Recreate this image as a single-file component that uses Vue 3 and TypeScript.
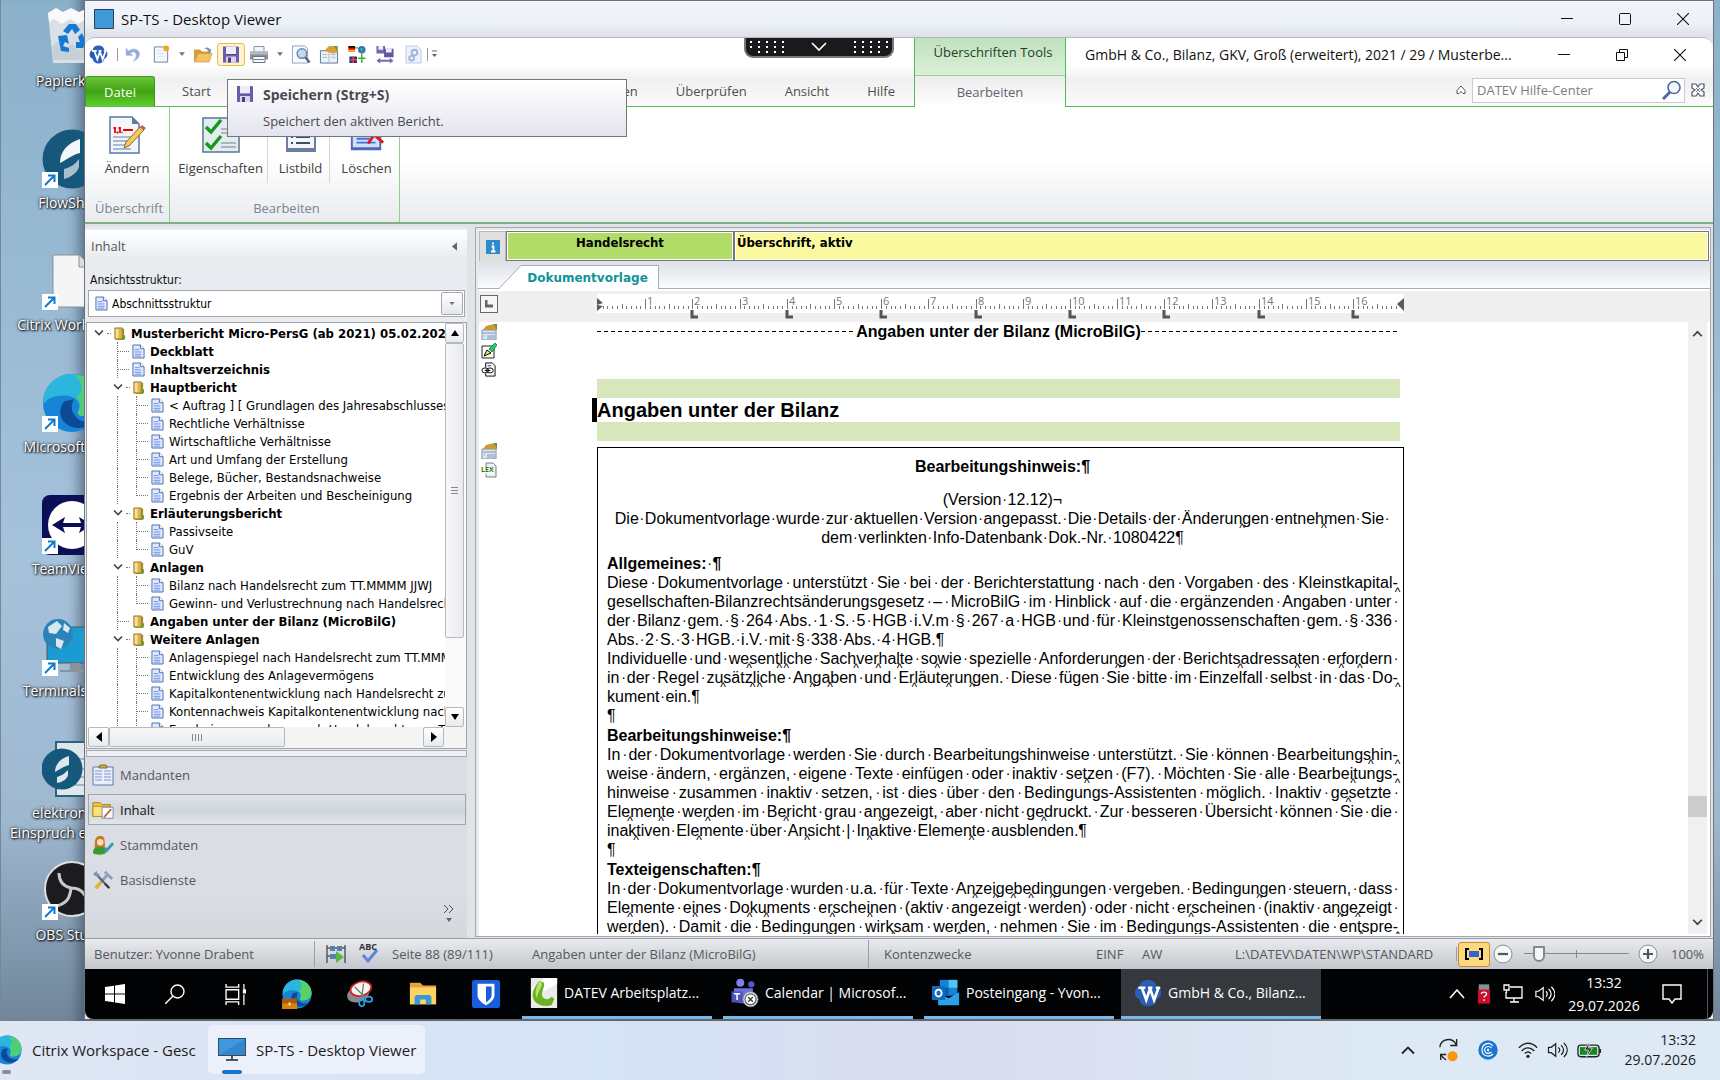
<script setup lang="ts">
import { h, ref } from 'vue'

type Art = [box: string, body: string]

const art: Record<string, Art> = {
  word: ['0 0 32 32', '<path d="M16 1c7 0 9 4 10 8 4 0 5 4 5 7s-2 6-5 7c-1 5-5 8-10 8S7 28 6 23c-3-1-5-3-5-7s2-7 5-7c1-5 4-8 10-8z" fill="#2a5fb5"/><path d="M5 10h8M9 10l5 14 4-12M18 10l5 14 5-14M16 10h5M25 10h5" fill="none" stroke="#fff" stroke-width="3"/>'],
  undo: ['0 0 16 16', '<path d="M1 1.500V9h7L5.500 6.500C8.500 4.500 11.500 6 11 9.500c-.3 2-1.500 3.500-3 5.500 4-1.500 7-4.500 6.500-8.500C14 3 8.500.5 3.800 4.500z" fill="#93abdc" stroke="#b9c9ea" stroke-width=".6"/>'],
  newdoc: ['0 0 18 20', '<path d="M2 2h14v16H2z" fill="#f4f7fc" stroke="#6d7f9d"/><path d="M5 6h8M5 9h8M5 12h8" stroke="#dbe4f2"/><circle cx="14.500" cy="3.500" r="3" fill="#f3a712"/>'],
  open: ['0 0 20 18', '<path d="M1 4h6l2 2h8v3H5L2 16H1z" fill="#d99b3c"/><path d="M5 8h14l-3 8.500H1.500z" fill="#f5c264" stroke="#c98b31" stroke-width=".6"/><path d="M11 3c3-2 5-1 6 1l1-1v4h-4l1.500-1C14.500 4 13 3 11 3z" fill="#8294b0"/>'],
  save: ['0 0 18 18', '<path d="M1 1h15l1 1v15H1z" fill="#6b5ca8"/><path d="M4 1h10v8H4z" fill="#eceff8"/><path d="M4 11h10v6H4z" fill="#d8d4ec"/><path d="M6 12h3v5H6z" fill="#4a3d86"/><path d="M4 9h10" stroke="#4f4391"/>'],
  print: ['0 0 20 18', '<path d="M5 1h10v7H5z" fill="#f2f4f8" stroke="#8d939d"/><path d="M1 6h18v8H1z" fill="#8b9099"/><path d="M1 6h18v3H1z" fill="#b3b7be"/><path d="M4 11h12v6H4z" fill="#f7f8fa" stroke="#6f747c"/><path d="M5 14h10" stroke="#5888c4"/>'],
  preview: ['0 0 20 20', '<path d="M1 1h13l3 3v15H1z" fill="#f7f9fd" stroke="#94a2b9"/><circle cx="11" cy="9" r="5" fill="#bcdcf5" stroke="#6e83a3" stroke-width="1.500"/><path d="M14.500 13l4.500 5.500" stroke="#55617a" stroke-width="2.500"/>'],
  props: ['0 0 20 20', '<path d="M1 6h18v13H1z" fill="#eaf0f8" stroke="#5d7291"/><path d="M10 6v13M3 10h5M3 13h5M12 10h5M12 13h5" stroke="#a9bad2"/><path d="M5 6l5-5h9v7l-5 1z" fill="#d9a033"/><path d="M15 1h4v6z" fill="#5ba441"/>'],
  flags: ['0 0 20 20', '<path d="M1 1h7v6H1z" fill="#e0001b"/><path d="M1 1h7v2H1z" fill="#111"/><path d="M1 5h7v2H1z" fill="#f6c400"/><path d="M2 12h8v7H2z" fill="#25357c"/><path d="M2 15.500h8M6 12v7" stroke="#e44" stroke-width="1.500"/><circle cx="15" cy="5" r="4" fill="#2c73c9"/><path d="M13 3l3 1-1 3z" fill="#63c044"/><path d="M8 3h3M15 9v10M11 14h8" stroke="#42ad33" stroke-width="1.500"/>'],
  savesync: ['0 0 20 20', '<path d="M1 1h9v8H1z" fill="#7365b0"/><path d="M3 1h5v4H3z" fill="#eef"/><path d="M9 4h10v9H9z" fill="#6556a3"/><path d="M11 4h6v4h-6z" fill="#eef"/><path d="M1 16.500l4-3v2h10v-2l4 3-4 3v-2H5v2z" fill="#7a66b5"/>'],
  gears: ['0 0 18 20', '<path d="M1 1h12l4 4v14H1z" fill="#eef3fb" stroke="#bac8de"/><circle cx="10" cy="8" r="3" fill="none" stroke="#9db6df" stroke-width="2"/><circle cx="7" cy="14" r="2.500" fill="none" stroke="#9db6df" stroke-width="2"/>'],
  more: ['0 0 8 10', '<path d="M1 1.500h6" stroke="#555"/><path d="M1 5h6L4 8.500z" fill="#666"/>'],
  down: ['0 0 8 6', '<path d="M0 0h8L4 5z" fill="#777"/>'],
  up: ['0 0 8 6', '<path d="M0 6h8L4 0z" fill="#000"/>'],
  downBlack: ['0 0 8 6', '<path d="M0 0h8L4 6z" fill="#000"/>'],
  left: ['0 0 6 10', '<path d="M6 0v10L0 5z" fill="#000"/>'],
  right: ['0 0 6 10', '<path d="M0 0v10l6-5z" fill="#000"/>'],
  leftGrey: ['0 0 6 10', '<path d="M6 0v10L0 5z" fill="#666"/>'],
  min: ['0 0 12 12', '<path d="M0 5.500h12" stroke="#111"/>'],
  max: ['0 0 12 12', '<rect x=".5" y=".5" width="11" height="11" rx="1" fill="none" stroke="#111"/>'],
  restore: ['0 0 12 12', '<path d="M.5 3.500h8v8h-8zM3.500 3V.5h8v8H9" fill="none" stroke="#111"/>'],
  close: ['0 0 12 12', '<path d="M0 0l12 12M12 0L0 12" stroke="#111" stroke-width="1.100"/>'],
  grip: ['0 0 36 14', '<path d="M1 2h36M1 7h36" stroke="#fff" stroke-width="2" stroke-dasharray="2 6"/><path d="M9 12h30" stroke="#fff" stroke-width="2" stroke-dasharray="2 6"/>'],
  gripR: ['0 0 36 14', '<path d="M1 2h36M1 7h36" stroke="#fff" stroke-width="2" stroke-dasharray="2 6"/><path d="M1 12h28" stroke="#fff" stroke-width="2" stroke-dasharray="2 6"/>'],
  chevWhite: ['0 0 16 10', '<path d="M1 1l7 7 7-7" fill="none" stroke="#fff" stroke-width="1.600"/>'],
  upWhite: ['0 0 16 10', '<path d="M1 9l7-8 7 8" fill="none" stroke="#fff" stroke-width="1.500"/>'],
  upDark: ['0 0 14 10', '<path d="M1 8.500l6-6 6 6" fill="none" stroke="#222" stroke-width="1.800"/>'],
  collapse: ['0 0 10 10', '<path d="M5 1l4 4.500v3H7L5 6.500 3 8.500H1v-3z" fill="#fff" stroke="#555"/>'],
  glass: ['0 0 20 20', '<circle cx="12" cy="7.500" r="6" fill="#f3f8ff" stroke="#4c68a4" stroke-width="1.600"/><path d="M8 12l-7 7" stroke="#4c68a4" stroke-width="3"/>'],
  xbox: ['0 0 14 14', '<path d="M1 1h4l2 3 2-3h4v4l-3 2 3 2v4H9l-2-3-2 3H1V9l3-2-3-2z" fill="#fff" stroke="#4d5568" stroke-width="1.200"/><path d="M5 5l4 4M9 5L5 9" stroke="#4d5568" stroke-width=".8"/>'],
  edit: ['0 0 38 40', '<path d="M2 2h22l7 7v29H2z" fill="#f3f6fb" stroke="#5c78a3" stroke-width="1.500"/><path d="M24 2v7h7" fill="#5c78a3"/><path d="M7 12v6M5.500 13H7M12 12v6M10.500 13H12" stroke="#e00" stroke-width="1.800"/><path d="M8.500 17.500h2M13.500 17.500h1M15 15h10" stroke="#e00" stroke-width="1.800"/><path d="M5 22h20M5 26h14M5 30h12M5 34h18" stroke="#8fa8cc" stroke-width="1.500"/><path d="M18 27L32 12l4 3-15 16-5 2z" fill="#f3c95e" stroke="#8d6b23"/><path d="M32 12l2-2 4 3-2 2z" fill="#c75a5a"/>'],
  checks: ['0 0 38 36', '<path d="M1 1h36v34H1z" fill="#e4ecf0" stroke="#557791" stroke-width="1.500"/><path d="M19 12h15M19 16h15M19 26h15M19 30h15" stroke="#99a4a8" stroke-width="1.500"/><path d="M4 10l5 5L19 3M4 26l5 5 10-12" fill="none" stroke="#149a1b" stroke-width="3.500"/>'],
  list: ['0 0 32 36', '<path d="M1 1h30v34H1z" fill="#6c7f9d"/><path d="M3 3h26v28H3z" fill="#f2f6fc"/><path d="M11 8h14M11 14h14M11 20h14M11 26h14" stroke="#3f4d63" stroke-width="2"/><path d="M6 8h2M6 14h2M6 20h2M6 26h2" stroke="#3f4d63" stroke-width="2"/>'],
  remove: ['0 0 38 36', '<path d="M2 1h32v33H2z" fill="#4d68b4"/><path d="M4 3h28v28H4z" fill="#cfe0fb"/><path d="M8 10h12M8 16h12M8 22h14M8 26h20" stroke="#4b70d8" stroke-width="2"/><path d="M20 12l16 14M34 8L20 27" stroke="#e01818" stroke-width="3"/>'],
  page: ['0 0 14 16', '<path d="M1 1h8l4 4v10H1z" fill="#dfe9ff" stroke="#4a68a8"/><path d="M9 1v4h4" fill="#fff" stroke="#4a68a8"/><path d="M3 6h5M3 8.500h7M3 11h7M3 13h7" stroke="#6a8be6"/>'],
  folder: ['0 0 14 16', '<path d="M2 2h8v12H2z" fill="#dcb54e" stroke="#7d6317" stroke-width=".8"/><path d="M3 3h3v10H3z" fill="#f7e09a"/><path d="M10 3h2v12H4l-1-1h7z" fill="#a98527"/><path d="M10 10h3v4h-3z" fill="#5ba52f"/>'],
  chev: ['0 0 10 8', '<path d="M1 1.500l4 4 4-4" fill="none" stroke="#444" stroke-width="1.600"/>'],
  clip: ['0 0 22 22', '<path d="M1 3h20v18H1z" fill="#e8eefb" stroke="#5d79b0"/><path d="M3 7h7M3 10h7M3 13h7M3 16h7M12 7h7M12 10h7M12 13h7M12 16h7" stroke="#7f97c8"/><path d="M7 4V2l2-1h4l2 1v2z" fill="#c9a94a" stroke="#80702c"/>'],
  inhalt: ['0 0 24 22', '<path d="M1 3h8l2 2h9v13H1z" fill="#f3c43b" stroke="#a9811e"/><path d="M1 7h19v11H1z" fill="#ffe080" stroke="#b08a24"/><path d="M11 8h12v12H11z" fill="#fdfdff" stroke="#6f88b5"/><path d="M13 19l8-9" stroke="#c66b2d" stroke-width="2"/>'],
  person: ['0 0 24 22', '<path d="M3 10c0-6 2-9 6-9s5 3 5 9v5H3z" fill="#c9772a"/><circle cx="9" cy="8" r="3.500" fill="#ffe0b5"/><path d="M1 20c0-5 3-7 8-7s6 3 6 7c-3 2-11 2-14 0z" fill="#3a9b35"/><path d="M14 14l2 3 7-8" fill="none" stroke="#2f9db0" stroke-width="3"/>'],
  tools: ['0 0 24 22', '<path d="M4 20L17 5M14 2l8 8" stroke="#8fa0b8" stroke-width="3"/><path d="M3 3l15 16" stroke="#55657d" stroke-width="2.500"/><path d="M4 20l6-7" stroke="#e5b62d" stroke-width="3.500"/><path d="M1 5l4-4 1 3 3 1-3 3z" fill="#8095b2"/><path d="M14 15l5 5" stroke="#333" stroke-width="2"/>'],
  more2: ['0 0 12 20', '<path d="M1 1l4 4-4 4M6 1l4 4-4 4" fill="none" stroke="#555"/><path d="M3 14h6l-3 4z" fill="#666"/>'],
  info: ['0 0 14 14', '<path d="M0 0h14v14H0z" fill="#2e8bcb"/><path d="M7 2.500v2M5.500 6.500h2v5M5 11.500h4.500" stroke="#fff" stroke-width="1.800" fill="none"/>'],
  card: ['0 0 16 16', '<path d="M1 6h14v10H1z" fill="#dbe7f7" stroke="#7b8ca8"/><path d="M2 9h12M3 12h1M6 12h8M6 14h8" stroke="#8496b5"/><path d="M2 6l3-4 8-2 3 1v5z" fill="#c99a35"/><path d="M13 0h3v6z" fill="#4ca23a"/>'],
  pen: ['0 0 16 16', '<path d="M1 3h12v12H1z" fill="#fff" stroke="#222"/><path d="M3 13l3-6 4 3z" fill="#f6ef43" stroke="#000"/><path d="M8 6l6-6 2 2-5 7z" fill="#1fd070" stroke="#064" stroke-width=".7"/>'],
  link: ['0 0 16 16', '<path d="M5 1h7l3 3v11H5z" fill="#fff" stroke="#000"/><path d="M7 4h4" stroke="#22c"/><path d="M1 6h12v6H1z" fill="#fff"/><rect x="1" y="6.500" width="7" height="5" rx="2.500" fill="none" stroke="#000"/><rect x="6" y="6.500" width="7" height="5" rx="2.500" fill="none" stroke="#000"/><path d="M4 9h6" stroke="#000"/>'],
  lexpage: ['0 0 16 16', '<path d="M5 1h7l3 3v11H5z" fill="#eef0f5" stroke="#777d8c"/><path d="M0 5h13v7H0z" fill="#f5faef"/>'],
  zoomfit: ['0 0 18 12', '<path d="M4 1H1v10h3M14 1h3v10h-3" fill="none" stroke="#000" stroke-width="2"/><path d="M4 3h10v6H4z" fill="#3266cf"/>'],
  minus: ['0 0 20 20', '<circle cx="10" cy="10" r="9" fill="#f6f7f8" stroke="#8a8f96"/><path d="M5 10h10" stroke="#555" stroke-width="2.200"/>'],
  plus: ['0 0 20 20', '<circle cx="10" cy="10" r="9" fill="#f6f7f8" stroke="#8a8f96"/><path d="M5 10h10M10 5v10" stroke="#555" stroke-width="2.200"/>'],
  play: ['0 0 22 20', '<path d="M2 1v18M20 1v18M2 4h18M2 12h10" stroke="#555b63" stroke-width="1.500"/><path d="M5 2h5v5H5zM12 2h5v5h-5zM5 10h6v5H5z" fill="#5681a8"/><path d="M11 7l8 6-8 6z" fill="#5eb546"/>'],
  tick: ['0 0 20 20', '<path d="M4 11l5 6L18 6" fill="none" stroke="#5b86dc" stroke-width="3"/>'],
  win: ['0 0 20 20', '<path d="M0 3l9-1.300V9.500H0zM10 1.500L20 0v9.500H10zM0 10.500h9v7.800L0 17zM10 10.500h10V20l-10-1.500z" fill="#fff"/>'],
  find: ['0 0 20 20', '<circle cx="12.500" cy="7.500" r="6.500" fill="none" stroke="#fff" stroke-width="1.400"/><path d="M8 12l-8 8" stroke="#fff" stroke-width="1.400"/>'],
  tasks: ['0 0 20 20', '<path d="M1 5.500h12v9H1zM1 0v3h12V0M1 20v-3h12v3" fill="none" stroke="#fff" stroke-width="1.300"/><path d="M18 0v5M18 10v10" stroke="#fff" stroke-width="1.200"/><path d="M17 5h3v4h-3z" fill="#fff"/>'],
  edge: ['0 0 32 32', '<circle cx="16" cy="16" r="15.500" fill="#1684d8"/><path d="M1 12C4 3 11 .5 16 .5 26 .5 31.500 8 31.500 15c0 5-4 8-9 8-3 0-4-1-3-3 2-4-2-8-7-8C7 12 3 13 .8 17z" fill="#2ab6dd"/><path d="M17 1c9 .5 14.500 7 14.500 14 0 5-4 8-9 8-3 0-4-1-3-3 1-2 1-5-1-7 4-3 3-9-1.500-12z" fill="#58d166" opacity=".85"/><path d="M12 15c-4 4-3 12 5 14 4 1 9 0 12-4-4 2-10 1-12-3-2-3-1-6 0-8z" fill="#0c4a96"/>'],
  edgeCase: ['0 0 32 32', '<circle cx="16" cy="16" r="15.500" fill="#1684d8"/><path d="M1 12C4 3 11 .5 16 .5 26 .5 31.500 8 31.500 15c0 5-4 8-9 8-3 0-4-1-3-3 2-4-2-8-7-8C7 12 3 13 .8 17z" fill="#2ab6dd"/><path d="M17 1c9 .5 14.500 7 14.500 14 0 5-4 8-9 8-3 0-4-1-3-3 1-2 1-5-1-7 4-3 3-9-1.500-12z" fill="#58d166"/><path d="M12 15c-4 4-3 12 5 14 4 1 9 0 12-4-4 2-10 1-12-3-2-3-1-6 0-8z" fill="#0c4a96"/><path d="M0 21h16v11H0z" fill="#d9820f"/><path d="M0 21h16v5H0z" fill="#a85a08"/><path d="M7 25h2v3H7z" fill="#ffe9a8"/>'],
  snip: ['0 0 32 32', '<ellipse cx="14" cy="16" rx="13" ry="9" transform="rotate(-20 14 16)" fill="#888b90"/><ellipse cx="17" cy="10" rx="12" ry="8" transform="rotate(-15 17 10)" fill="#f5f5f5" stroke="#cf2323" stroke-width="2"/><path d="M10 8l12 12M20 4l-2 16" stroke="#777" stroke-width="1.500"/><ellipse cx="18" cy="26" rx="3" ry="4" fill="none" stroke="#27a0e4" stroke-width="2"/><ellipse cx="26" cy="22" rx="4" ry="3" fill="none" stroke="#27a0e4" stroke-width="2"/>'],
  explorer: ['0 0 30 26', '<path d="M1 1h11l3 3h14v20H1z" fill="#e6a23c"/><path d="M1 6h28v18H1z" fill="#fdd462"/><path d="M6 24v-8l2-2h14l2 2v8h-6v-5h-6v5z" fill="#3a97db"/>'],
  shield: ['0 0 32 32', '<rect x="1" y="1" width="30" height="30" rx="3" fill="#175ddc"/><path d="M7 5h18v12c0 5-4 8-9 11-5-3-9-6-9-11z" fill="#fff"/><path d="M16 8h6v9c0 3-2 5-6 8z" fill="#175ddc"/>'],
  datev: ['0 0 28 32', '<path d="M0 0h28v32H0z" fill="#e9ebe6"/><path d="M0 12L14 0H28v6L14 14z" fill="#fff"/><path d="M9 3C4 9 0 16 3 23c3 6 11 8 19 6l3-7-3-2c-3 4-9 3-10-1-1-5 3-9 2-14z" fill="#6ab023"/><path d="M9 3C6 9 3 17 7 22c-1-6 4-10 5-16z" fill="#b8e26a"/>'],
  teams: ['0 0 34 38', '<circle cx="11" cy="6" r="5" fill="#7b83eb"/><circle cx="25" cy="8" r="4" fill="#5059c9"/><path d="M3 13h24v14c0 6-20 8-24 0z" fill="#6a72dc"/><path d="M0 17h14v14H0z" fill="#4b53bc"/><path d="M3 20h8M7 20v8" stroke="#fff" stroke-width="2"/><circle cx="24" cy="27" r="9.500" fill="#f2f2f2" stroke="#888"/><circle cx="24" cy="27" r="7" fill="#fff" stroke="#555" stroke-width="1.500"/><path d="M21 24l6 6M27 24l-6 6" stroke="#444" stroke-width="1.800"/>'],
  outlook: ['0 0 32 32', '<path d="M9 1h20v18H9z" fill="#1583d8"/><path d="M19 1h10v9H19z" fill="#4fc4f7"/><path d="M9 10h10v9H9z" fill="#0a5ea8"/><path d="M7 16l12 6 12-7v15H7z" fill="#2aa2e8"/><path d="M0 8h15v16H0z" fill="#0f6cbd"/><ellipse cx="7.500" cy="16" rx="3.500" ry="4" fill="none" stroke="#fff" stroke-width="2"/>'],
  usb: ['0 0 16 22', '<path d="M2 0h12v7H2z" fill="#8a8f99"/><path d="M1 6h14v16H1z" fill="#c8102e"/><path d="M5 11c0-3 6-3 6 0 0 2-3 2-3 4M8 17v2" stroke="#fff" stroke-width="1.500" fill="none"/>'],
  net: ['0 0 20 20', '<path d="M7 3h12v11H3V8M7 18h9M11 14v4M1 1h5v5H1zM3.500 6v3" fill="none" stroke="#fff" stroke-width="1.300"/>'],
  vol: ['0 0 22 20', '<path d="M1 7h3l5-4v14l-5-4H1z" fill="none" stroke="currentColor" stroke-width="1.300"/><path d="M12 7c2 2 2 4 0 6M15 4.500c3.500 3.500 3.500 7.500 0 11M18 2c5 5 5 11 0 16" fill="none" stroke="currentColor" stroke-width="1.300"/>'],
  note: ['0 0 20 20', '<path d="M1 1h18v14h-6l-3 4-3-4H1z" fill="none" stroke="#fff" stroke-width="1.400"/>'],
  monitor: ['0 0 28 24', '<path d="M0 0h28v18H0z" fill="#3b4a58"/><path d="M1 1h26v16H1z" fill="#3f98de"/><path d="M1 17L27 1v16z" fill="#3187cf"/><path d="M13 18h2v3h-2zM8 21h12v2H8z" fill="#4b5864"/>'],
  sync: ['0 0 22 26', '<path d="M2 10c1-9 13-12 18-3M20.500 1v7h-7M9 18H3v6" fill="none" stroke="#222" stroke-width="1.500"/><path d="M3 18c2 3 3 4 6 6" fill="none" stroke="#222" stroke-width="1.500"/><circle cx="16" cy="20" r="5.500" fill="#f7960f"/>'],
  citrix: ['0 0 20 20', '<circle cx="10" cy="10" r="9.700" fill="#1b74cc"/><path d="M15 6c-4-5-11-2-11 4s7 8 11 4M13.500 8c-3-3-7-1-7 2s4 4.500 7 2M11 9.500c-2-1-2 1.500 0 1" fill="none" stroke="#fff" stroke-width="1.200"/>'],
  wifi: ['0 0 22 18', '<path d="M1 6.500c6-6.500 14-6.500 20 0M4 10c4.500-4.500 9.500-4.500 14 0M7.500 13c2.500-2.500 4.500-2.500 7 0" fill="none" stroke="#222" stroke-width="1.500"/><circle cx="11" cy="16" r="1.800" fill="#222"/>'],
  battery: ['0 0 26 18', '<rect x="1" y="4" width="22" height="12" rx="3" fill="none" stroke="#222" stroke-width="1.400"/><path d="M3 6h18v8H3z" fill="#13891b"/><path d="M24 8v4" stroke="#222" stroke-width="2"/><path d="M13 0L8 9h4l-2 7 6-9h-4z" fill="#222" stroke="#eef" stroke-width=".8"/>'],
  bin: ['0 0 50 56', '<path d="M1 6h48l-5 50H6z" fill="#dfe5ea" opacity=".9"/><path d="M1 6l8-5 7 4 8-4 8 4 9-4 8 5-1 10-9-4-8 5-8-5-8 5-8-5-5 3z" fill="#f7f9fa"/><path d="M5 40l6-6 6 8 8-5 8 6 6-6 6 4-2 12H6z" fill="#c9d0d5"/><path d="M16 24l6-7h7l4 6-5 4-3-5-4 5zM35 26l4 9-3 6h-7v-6h4l-2-5zM11 29l9-1 2 9-4-2-2 4 6 2v4l-8-1z" fill="#1479d4"/>'],
  flow: ['0 0 60 60', '<circle cx="30" cy="30" r="29.500" fill="#16587c"/><path d="M18 34c0-12 8-20 20-24v14c-8 2-12 6-20 10z" fill="#f4f7f9"/><path d="M37 30v8c-2 6-8 10-15 12V40c8-2 11-5 15-10z" fill="#a8bfcb"/>'],
  sheet: ['0 0 60 60', '<path d="M11 4h26l12 12v40H11z" fill="#f5f5f5" stroke="#8f8f8f"/><path d="M37 4v12h12" fill="#ddd" stroke="#8f8f8f"/>'],
  tv: ['0 0 60 60', '<rect width="60" height="60" rx="8" fill="#0a0f57"/><circle cx="30" cy="30" r="24" fill="#fff"/><path d="M10 30l13-8-2 6h18l-2-6 13 8-13 8 2-6H21l2 6z" fill="#0a0f57"/>'],
  term: ['0 0 60 60', '<path d="M5 10h54v36H5z" fill="#1c9bd0" stroke="#555"/><path d="M28 46h10v7H28zM18 53h34v2H18z" fill="#8c9296"/><circle cx="16" cy="17" r="15" fill="#2c83b8"/><path d="M6 10l9-6 5 5-6 8-7-1zM14 21l8 3-3 8-5-3zM22 6l6 5-2 5-5-3z" fill="#d8e8ee"/>'],
  elek: ['0 0 60 60', '<path d="M14 3h46v54H14z" fill="#dfe7ea" stroke="#27647e" stroke-width="2"/><path d="M34 20h24M34 30h24M34 38h24M20 46h38" stroke="#98bac6" stroke-width="2"/><circle cx="20" cy="30" r="20.500" fill="#16587c"/><path d="M13 33c0-8 6-14 14-16v9c-6 2-9 4-14 7zM26 31v5c-1 4-5 7-11 8v-6c6-2 8-4 11-7z" fill="#dce7ec"/>'],
  obs: ['0 0 60 60', '<circle cx="30" cy="28" r="27" fill="#1c1b20" stroke="#dfdfdf" stroke-width="2"/><path d="M17 12c0 8 3 13 12 15-1 10-4 15-14 18M29 27c8 0 12 3 16 11" fill="none" stroke="#c9c9cb" stroke-width="3"/>'],
  shortcut: ['0 0 16 16', '<path d="M0 0h16v16H0z" fill="#fff"/><path d="M3 13L12 4M6 3.500h6.500V10" fill="none" stroke="#0f7bd0" stroke-width="2"/>'],
  viewer: ['0 0 20 20', '<path d="M.5.5h19v19H.5z" fill="#3f98d8" stroke="#2b3f50"/>'],
}

const Icon = (p: { n: string; w: number; hh?: number }) =>
  h('svg', { viewBox: art[p.n][0], width: p.w, height: p.hh ?? p.w, innerHTML: art[p.n][1], 'aria-hidden': 'true', style: 'display:block;flex:none' })
Icon.props = ['n', 'w', 'hh']

const shortcuts = [
  { n: 'bin', t: ['Papierkorb'], link: false },
  { n: 'flow', t: ['FlowShare'], link: true },
  { n: 'sheet', t: ['Citrix Workspace'], link: true },
  { n: 'edge', t: ['Microsoft Edge'], link: true },
  { n: 'tv', t: ['TeamViewer'], link: true },
  { n: 'term', t: ['Terminalserver'], link: true },
  { n: 'elek', t: ['elektronisch', 'Einspruch einlegen'], link: false },
  { n: 'obs', t: ['OBS Studio'], link: true },
]

interface Node { d: number; k: 'f' | 'p' | 'e'; t: string; last?: boolean }
const tree: Node[] = [
  { d: 0, k: 'f', t: 'Musterbericht Micro-PersG (ab 2021) 05.02.2021' },
  { d: 1, k: 'p', t: 'Deckblatt' },
  { d: 1, k: 'p', t: 'Inhaltsverzeichnis' },
  { d: 1, k: 'f', t: 'Hauptbericht' },
  { d: 2, k: 'p', t: '< Auftrag ] [ Grundlagen des Jahresabschlusses' },
  { d: 2, k: 'p', t: 'Rechtliche Verhältnisse' },
  { d: 2, k: 'p', t: 'Wirtschaftliche Verhältnisse' },
  { d: 2, k: 'p', t: 'Art und Umfang der Erstellung' },
  { d: 2, k: 'p', t: 'Belege, Bücher, Bestandsnachweise' },
  { d: 2, k: 'p', t: 'Ergebnis der Arbeiten und Bescheinigung', last: true },
  { d: 1, k: 'f', t: 'Erläuterungsbericht' },
  { d: 2, k: 'p', t: 'Passivseite' },
  { d: 2, k: 'p', t: 'GuV', last: true },
  { d: 1, k: 'f', t: 'Anlagen' },
  { d: 2, k: 'p', t: 'Bilanz nach Handelsrecht zum TT.MMMM JJWJ' },
  { d: 2, k: 'p', t: 'Gewinn- und Verlustrechnung nach Handelsrecht', last: true },
  { d: 1, k: 'e', t: 'Angaben unter der Bilanz (MicroBilG)' },
  { d: 1, k: 'f', t: 'Weitere Anlagen' },
  { d: 2, k: 'p', t: 'Anlagenspiegel nach Handelsrecht zum TT.MMMM' },
  { d: 2, k: 'p', t: 'Entwicklung des Anlagevermögens' },
  { d: 2, k: 'p', t: 'Kapitalkontenentwicklung nach Handelsrecht zum' },
  { d: 2, k: 'p', t: 'Kontennachweis Kapitalkontenentwicklung nach' },
  { d: 2, k: 'p', t: 'Ergebnisverwendung nach Handelsrecht zum TT' },
]

// "~" marks a possible word break, a trailing blank is drawn as a dot
type Kind = 'j' | 'l' | 'c' | 'b' | 'e'
const lines: [Kind, string][] = [
  ['c', '(Version 12.12)¬'],
  ['c', 'Die Dokumentvorlage wurde zur aktuellen Version angepasst. Die Details der Änderun~gen entneh~men Sie '],
  ['c', 'dem verlinkten Info-Datenbank Dok.-Nr. 1080422¶'],
  ['b', 'Allgemeines: ¶'],
  ['j', 'Diese Dokumentvorlage unterstützt Sie bei der Berichterstattung nach den Vorgaben des Kleinstkapital-~'],
  ['j', 'gesellschaften-Bilanzrechtsänderungsgesetz – MicroBilG im Hinblick auf die ergänzenden Angaben unter '],
  ['j', 'der Bilanz gem. § 264 Abs. 1 S. 5 HGB i.V.m § 267 a HGB und für Kleinstgenossenschaften gem. § 336 '],
  ['l', 'Abs. 2 S. 3 HGB. i.V. mit § 338 Abs. 4 HGB.¶'],
  ['j', 'Individuelle und we~sent~li~che Sach~ver~hal~te so~wie spezielle Anforderun~gen der Berichts~adressa~ten er~for~dern '],
  ['j', 'in der Regel zu~sätz~li~che An~ga~ben und Er~läute~run~gen. Diese fügen Sie bitte im Einzelfall selbst in das Do-~'],
  ['l', 'kument ein.¶'],
  ['e', '¶'],
  ['b', 'Bearbeitungshinweise:¶'],
  ['j', 'In der Dokumentvorlage werden Sie durch Bearbeitungshinweise unterstützt. Sie können Bearbeitungs~hin-~'],
  ['j', 'weise ändern, ergänzen, eigene Texte einfügen oder inaktiv set~zen (F7). Möchten Sie alle Bearbei~tungs-~'],
  ['j', 'hinweise zusammen inaktiv setzen, ist dies über den Bedingungs-Assistenten möglich. Inaktiv ge~setzte '],
  ['j', 'Ele~men~te wer~den im Be~richt grau an~gezeigt, aber nicht ge~druckt. Zur besseren Übersicht können Sie die '],
  ['l', 'inak~tiven Ele~mente über An~sicht | In~aktive Elemen~te ausblenden.¶'],
  ['e', '¶'],
  ['b', 'Texteigenschaften:¶'],
  ['j', 'In der Dokumentvorlage wurden u.a. für Texte An~zei~ge~be~din~gungen vergeben. Bedingun~gen steuern, dass '],
  ['j', 'Ele~mente ei~nes Do~ku~ments er~schei~nen (aktiv angezeigt werden) oder nicht er~scheinen (inaktiv an~ge~zeigt '],
  ['j', 'wer~den). Damit die Bedingun~gen wirk~sam wer~den, nehmen Sie im Bedin~gungs-Assistenten die ent~spre-~'],
]
const doc = lines.map(([k, s]) => ({ k, words: s.split(' ').map((w) => w.split('~')) }))

const cm = 47.2
const ticks = Array.from({ length: 169 }, (_, i) => i + 1).filter((i) => i % 10)
const nums = Array.from({ length: 16 }, (_, i) => i + 1)
const tickX = (i: number) => Math.round((i * cm) / 10) + 1

const quick: [string, number, boolean?][] = [
  ['undo', 16], ['newdoc', 18, true], ['open', 20], ['save', 18], ['print', 20, true],
  ['preview', 20], ['props', 20], ['flags', 20], ['savesync', 20], ['gears', 17],
]
const nav = [['clip', 'Mandanten'], ['inhalt', 'Inhalt'], ['person', 'Stammdaten'], ['tools', 'Basisdienste']]
const system: [string, number][] = [['win', 20], ['find', 20], ['tasks', 21]]
const pinned: [string, number][] = [['edgeCase', 30], ['snip', 28], ['explorer', 28], ['shield', 30]]
const apps: [string, string][] = [['datev', 'DATEV Arbeitsplatz...'], ['teams', 'Calendar | Microsof...'], ['outlook', 'Posteingang - Yvon...'], ['word', 'GmbH & Co., Bilanz...']]
const structure = ref('Abschnittsstruktur')
const zoom = ref(10)
const query = ref('')
</script>

<template>
  <div class="screen">
    <div class="desk">
      <div class="shortcuts">
        <div v-for="s in shortcuts" :key="s.n" class="short">
          <span class="pic">
            <Icon :n="s.n" :w="s.n === 'bin' ? 50 : 60" :hh="s.n === 'bin' ? 56 : 60" />
            <Icon v-if="s.link" class="arrow" n="shortcut" :w="16" />
          </span>
          <span v-for="t in s.t" :key="t" class="name">{{ t }}</span>
        </div>
      </div>

      <section class="win">
        <header class="title">
          <Icon n="viewer" :w="20" />
          <span class="grow">SP-TS - Desktop Viewer</span>
          <button class="wb" aria-label="Minimieren"><Icon n="min" :w="12" /></button>
          <button class="wb" aria-label="Maximieren"><Icon n="max" :w="12" /></button>
          <button class="wb" aria-label="Schließen"><Icon n="close" :w="12" /></button>
        </header>

        <div class="session">
          <div class="pill"><Icon n="grip" :w="36" :hh="14" /><Icon n="chevWhite" :w="16" :hh="10" /><Icon n="gripR" :w="36" :hh="14" /></div>

          <div class="head">
            <div class="h-left">
              <div class="quick">
                <Icon n="word" :w="19" />
                <i class="bar" />
                <template v-for="q in quick" :key="q[0]">
                  <button class="qb" :class="{ on: q[0] === 'save' }" :aria-label="q[0]"><Icon :n="q[0]" :w="q[1]" :hh="19" /></button>
                  <Icon v-if="q[2]" class="dd" n="down" :w="6" :hh="5" />
                </template>
                <i class="bar thin" />
                <Icon n="more" :w="7" :hh="10" />
              </div>
              <nav class="tabs">
                <button class="datei">Datei</button>
                <button class="tab">Start</button>
                <span class="grow" />
                <button class="tab">en</button>
                <button class="tab">Überprüfen</button>
                <button class="tab">Ansicht</button>
                <button class="tab">Hilfe</button>
              </nav>
            </div>
            <div class="ctx">
              <div class="ctx-top">Überschriften Tools</div>
              <button class="ctx-tab">Bearbeiten</button>
            </div>
            <div class="h-right">
              <div class="apptitle">
                <span class="grow">GmbH &amp; Co., Bilanz, GKV, Groß (erweitert), 2021 / 29 / Musterbe...</span>
                <button class="wb" aria-label="Minimieren"><Icon n="min" :w="12" /></button>
                <button class="wb" aria-label="Wiederherstellen"><Icon n="restore" :w="12" /></button>
                <button class="wb" aria-label="Schließen"><Icon n="close" :w="12" /></button>
              </div>
              <div class="help">
                <Icon n="collapse" :w="10" />
                <div class="search">
                  <input v-model="query" type="text" placeholder="DATEV Hilfe-Center" aria-label="DATEV Hilfe-Center" />
                  <Icon n="glass" :w="20" />
                </div>
                <Icon n="xbox" :w="14" />
              </div>
            </div>
          </div>

          <div class="ribbon">
            <div class="group">
              <div class="btns"><button class="big first"><Icon n="edit" :w="38" :hh="40" />Ändern</button></div>
              <div class="gname">Überschrift</div>
            </div>
            <div class="group two">
              <div class="btns">
                <button class="big w1"><Icon n="checks" :w="38" :hh="40" />Eigenschaften</button>
                <button class="big w2"><Icon n="list" :w="32" :hh="40" />Listbild</button>
                <button class="big w3"><Icon n="remove" :w="36" :hh="40" />Löschen</button>
              </div>
              <div class="gname">Bearbeiten</div>
            </div>
          </div>

          <div class="tip" role="tooltip">
            <Icon n="save" :w="18" />
            <div><b>Speichern (Strg+S)</b><p>Speichert den aktiven Bericht.</p></div>
          </div>

          <div class="work">
            <aside class="side">
              <div class="side-head"><span class="grow">Inhalt</span><Icon n="leftGrey" :w="5" :hh="9" /></div>
              <label class="lab" for="structure">Ansichtsstruktur:</label>
              <div class="combo">
                <Icon n="page" :w="13" :hh="15" />
                <select id="structure" v-model="structure"><option>Abschnittsstruktur</option></select>
                <span class="drop"><Icon n="down" :w="6" :hh="4" /></span>
              </div>
              <div class="treebox">
                <div class="trow">
                  <ul class="tree">
                    <li v-for="(n, i) in tree" :key="i">
                      <i v-for="c in n.d" :key="c" class="cell" :class="{ v: c > 1 }" />
                      <i class="cell" :class="{ v: n.k !== 'f', stub: n.k !== 'f', half: n.last, dash: n.k === 'f' }">
                        <Icon v-if="n.k === 'f'" n="chev" :w="10" :hh="8" />
                      </i>
                      <i class="ico"><Icon :n="n.k === 'p' ? 'page' : 'folder'" :w="13" :hh="15" /></i>
                      <span :class="{ bold: n.d < 2 }">{{ n.t }}</span>
                    </li>
                  </ul>
                  <div class="vbar">
                    <button class="sb" aria-label="Nach oben"><Icon n="up" :w="10" :hh="6" /></button>
                    <div class="vthumb"><i /><i /><i /></div>
                    <span class="grow" />
                    <button class="sb" aria-label="Nach unten"><Icon n="downBlack" :w="10" :hh="6" /></button>
                  </div>
                </div>
                <div class="hbar">
                  <button class="sb" aria-label="Nach links"><Icon n="left" :w="6" :hh="10" /></button>
                  <div class="hthumb"><i /><i /><i /><i /></div>
                  <span class="grow" />
                  <button class="sb" aria-label="Nach rechts"><Icon n="right" :w="6" :hh="10" /></button>
                </div>
              </div>
              <div class="split" />
              <nav class="nav">
                <button v-for="n in nav" :key="n[0]" :class="{ on: n[1] === 'Inhalt' }"><Icon :n="n[0]" :w="22" />{{ n[1] }}</button>
              </nav>
              <div class="navmore"><Icon n="more2" :w="12" :hh="20" /></div>
            </aside>

            <main class="main">
              <div class="inforow">
                <span class="ib"><Icon n="info" :w="14" /></span>
                <div class="law">Handelsrecht</div>
                <div class="state">Überschrift, aktiv</div>
              </div>
              <div class="dtabs">
                <svg width="24" height="24" viewBox="0 0 24 24" aria-hidden="true"><path d="M0 24L22 1h2v23z" fill="#fff" /><path d="M0 23.500L22 .5h2" fill="none" stroke="#aaadb2" /></svg>
                <button class="dtab">Dokumentvorlage</button>
              </div>
              <div class="rulerrow">
                <span class="tabkind"><svg width="8" height="8"><path d="M1 0v6h7" fill="none" stroke="#666" stroke-width="3" /></svg></span>
                <svg class="ruler" width="808" height="31" aria-hidden="true">
                  <path d="M0 3h807v19H0z" fill="#fff" />
                  <path d="M0 7l6 5-6 2zM0 20v-6l6 1zM807 7l-7 6 7 7z" fill="#5a5a5a" />
                  <path v-for="i in ticks" :key="i" :d="`M${tickX(i)}.5 ${i % 5 ? 15 : 13}v${i % 5 ? 3 : 5}`" stroke="#777" />
                  <template v-for="i in nums" :key="'n' + i">
                    <path :d="`M${tickX(i * 10)}.5 8v10`" stroke="#777" />
                    <text :x="tickX(i * 10) + 2" y="14" class="rnum">{{ i }}</text>
                    <path v-if="i % 2 === 0" :d="`M${tickX(i * 10)} 19v7h6`" fill="none" stroke="#555" stroke-width="3" />
                  </template>
                </svg>
              </div>
              <div class="docrow">
                <div class="gutter">
                  <Icon n="card" :w="16" /><Icon n="pen" :w="16" /><Icon n="link" :w="15" />
                  <div class="gut2"><Icon n="card" :w="16" /><span class="lex"><Icon n="lexpage" :w="16" /><b>LEX</b></span></div>
                </div>
                <article class="page">
                  <div class="sec"><i /><b>Angaben unter der Bilanz (MicroBilG)</b><i /></div>
                  <div class="band" />
                  <h1>Angaben unter der Bilanz</h1>
                  <div class="band" />
                  <div class="box">
                    <h2>Bearbeitungshinweis:¶</h2>
                    <p v-for="(l, i) in doc" :key="i" :class="l.k"><template v-for="(w, j) in l.words" :key="j"><i v-if="j" class="dot">·</i><span v-if="w[0]"><template v-for="(s, m) in w" :key="m"><i v-if="m" class="soft" />{{ s }}</template></span></template></p>
                  </div>
                </article>
                <div class="docbar"><Icon n="chev" class="flip" :w="11" :hh="9" /><span class="grow" /><i class="dthumb" /><Icon n="chev" :w="11" :hh="9" /></div>
              </div>
            </main>
          </div>

          <footer class="status">
            <span class="s-user">Benutzer: Yvonne Drabent</span>
            <Icon n="play" :w="22" :hh="20" />
            <span class="abc"><b>ABC</b><Icon n="tick" :w="20" /></span>
            <span class="s-page">Seite 88 (89/111)</span>
            <span class="s-sec">Angaben unter der Bilanz (MicroBilG)</span>
            <span class="grow">Kontenzwecke</span>
            <span class="s-ein">EINF</span>
            <span class="s-aw">AW</span>
            <span class="s-path">L:\DATEV\DATEN\WP\STANDARD</span>
            <button class="fit" aria-label="Seitenbreite"><Icon n="zoomfit" :w="18" :hh="12" /></button>
            <button class="rnd" aria-label="Verkleinern"><Icon n="minus" :w="20" /></button>
            <input v-model="zoom" type="range" min="0" max="100" aria-label="Zoom" />
            <button class="rnd" aria-label="Vergrößern"><Icon n="plus" :w="20" /></button>
            <span class="s-zoom">100%</span>
          </footer>

          <div class="rtask">
            <button v-for="p in system" :key="p[0]" class="sys" :aria-label="p[0]"><Icon :n="p[0]" :w="p[1]" /></button>
            <button v-for="p in pinned" :key="p[0]" class="pin" :aria-label="p[0]"><Icon :n="p[0]" :w="p[1]" /></button>
            <div class="apps">
              <button v-for="a in apps" :key="a[0]" class="app" :class="{ on: a[0] === 'word' }"><Icon :n="a[0]" :w="28" :hh="30" />{{ a[1] }}</button>
            </div>
            <span class="grow" />
            <div class="rtray">
              <Icon n="upWhite" :w="16" :hh="10" /><Icon n="usb" :w="14" :hh="20" /><Icon n="net" :w="20" /><Icon n="vol" :w="20" />
            </div>
            <div class="rclock">13:32<br />29.07.2026</div>
            <Icon n="note" :w="20" />
            <i class="peek" />
          </div>
        </div>
      </section>
    </div>

    <footer class="taskbar">
      <button class="host h1b"><Icon n="edge" :w="30" />Citrix Workspace - Gesc</button>
      <button class="host h2b"><Icon n="monitor" :w="28" :hh="24" />SP-TS - Desktop Viewer</button>
      <span class="grow" />
      <div class="htray">
        <Icon n="upDark" :w="14" :hh="10" /><Icon n="sync" :w="20" :hh="24" /><Icon n="citrix" :w="20" />
        <div class="trio"><Icon n="wifi" :w="20" :hh="18" /><Icon n="vol" :w="21" :hh="18" /><Icon n="battery" :w="25" :hh="18" /></div>
      </div>
      <div class="hclock">13:32<br />29.07.2026</div>
    </footer>
  </div>
</template>

<style>
body { margin: 0; }
</style>

<style scoped>
* { box-sizing: border-box; }
button { border: 0; background: none; padding: 0; font: inherit; color: inherit; }
.screen { height: 100vh; display: flex; flex-direction: column; overflow: hidden; font-family: "Open Sans", "Noto Sans", sans-serif; font-size: 13px; color: #222; }
.grow { flex: 1; min-width: 0; }
.desk { flex: 1; min-height: 0; display: flex; padding-right: 6px; background: linear-gradient(180deg, #8cb1cb, #a5c2db 55%, #9eb8d0 80%, #71869b); }
.shortcuts { width: 84px; flex: none; overflow: hidden; display: flex; flex-direction: column; box-shadow: inset -16px 0 14px -12px rgba(40, 55, 75, .6); border-left: 1px solid #72899c; font-size: 14px; }
.short { width: 142px; height: 122px; padding-top: 7px; flex: none; display: flex; flex-direction: column; align-items: center; }
.pic { position: relative; height: 64px; display: flex; align-items: flex-start; }
.pic .arrow { position: absolute; left: 0; bottom: 5px; }
.name { line-height: 20px; color: #fff; text-shadow: 1px 1px 2px #000, 0 0 3px #000; white-space: nowrap; }

.win { flex: 1; min-width: 0; display: flex; flex-direction: column; border: 1px solid #6f7378; border-bottom: 2px solid #63666b; background: #e3e6ec; }
.title { height: 36px; flex: none; display: flex; align-items: center; padding: 0 1px 0 9px; background: linear-gradient(180deg, #f0f3fc, #edf2fa 60%, #dde1e6); color: #111; font-size: 15px; }
.title .grow { padding-left: 7px; line-height: 34px; }
.wb { width: 58px; height: 30px; display: flex; align-items: center; justify-content: center; }
.session { flex: 1; min-height: 0; display: flex; flex-direction: column; position: relative; border-top: 1px solid #b5b7ba; border-radius: 10px 10px 8px 8px; overflow: hidden; background: #e4e8ea; }
.pill { position: absolute; left: 659px; top: 0; width: 150px; height: 20px; background: #1a1a1c; border: 2px solid #77797c; border-top: 0; border-radius: 0 0 9px 9px; display: flex; align-items: center; justify-content: space-between; padding: 0 3px; z-index: 3; }

.head { height: 69px; flex: none; display: grid; grid-template-columns: 829px 152px 1fr; background: linear-gradient(180deg, #fff, #fff 38%, #f0f0f0 60%, #fbfbfb); }
.h-left, .h-right { display: flex; flex-direction: column; min-width: 0; border-bottom: 1px solid #52be52; }
.quick { height: 38px; display: flex; align-items: center; padding: 0 0 6px 4px; }
.bar { width: 1px; height: 13px; background: #999; margin: 0 1px 0 9px; }
.bar.thin { margin: 0 3px 0 0; }
.qb { width: 28px; height: 23px; display: flex; align-items: center; justify-content: center; }
.qb.on { border: 1px solid #e6bf4a; background: #fff3cd; border-radius: 3px; }
.dd { margin: 0 4px; }
.tabs { flex: 1; display: flex; color: #4e4e4e; }
.datei { width: 70px; background: linear-gradient(180deg, #6cc339, #3fa314 50%, #5fcf2c); color: #fff; border: 1px solid #3f9b1f; border-bottom: 0; border-radius: 3px 3px 0 0; }
.tab { padding: 0 19px; }
.datei + .tab { padding: 0 27px; }
.ctx { border: 1px solid #52be52; border-top: 0; border-bottom: 0; display: flex; flex-direction: column; background: #fff; }
.ctx-top { height: 38px; background: linear-gradient(180deg, #bfe2bb, #dcefd9); border-bottom: 1px solid #9ad29a; text-align: center; padding: 4px 0 0 6px; line-height: 20px; color: #23402a; white-space: nowrap; }
.ctx-tab { flex: 1; color: #5f6470; background: linear-gradient(180deg, #ececec, #fff); }
.apptitle { height: 38px; display: flex; align-items: center; padding: 0 4px 5px 19px; color: #111; font-size: 14px; white-space: nowrap; }
.help { flex: 1; display: flex; align-items: center; justify-content: flex-end; gap: 6px; padding: 0 8px 2px 0; }
.search { width: 213px; height: 25px; border: 1px solid #c9cbce; background: #fff; display: flex; align-items: center; padding-right: 2px; }
.search input { flex: 1; min-width: 0; border: 0; outline: 0; background: none; padding: 0 4px; font: inherit; }
.search input::placeholder { color: #7d7d7d; opacity: 1; }

.ribbon { height: 117px; flex: none; display: flex; background: linear-gradient(180deg, #fff 45%, #e9ebee); border-bottom: 2px solid #7fae86; }
.group { width: 85px; display: flex; flex-direction: column; border-right: 1px solid #8fcf8f; text-align: center; color: #3f3f3f; }
.group.two { width: 230px; }
.btns { flex: 1; display: flex; padding-top: 8px; }
.big { display: flex; flex-direction: column; align-items: center; gap: 3px; line-height: 20px; height: 68px; padding-left: 4px; }
.first { width: 85px; padding-left: 0; }
.w1 { width: 98px; border-right: 1px solid #d4d6d8; }
.w2 { width: 62px; border-right: 1px solid #d4d6d8; }
.w3 { width: 69px; }
.gname { height: 24px; line-height: 20px; color: #7b8494; padding-left: 4px; }

.tip { position: absolute; z-index: 4; left: 142px; top: 41px; width: 400px; height: 58px; border: 1px solid #767679; background: linear-gradient(180deg, #fff, #e4e4ef); display: flex; gap: 9px; padding: 5px 8px; color: #4a4a4e; }
.tip b { display: block; line-height: 20px; font-size: 14px; }
.tip p { margin: 6px 0 0; line-height: 20px; }

.work { flex: 1; min-height: 0; display: flex; padding-top: 3px; background: #e0e4e6; }
.side { width: 382px; flex: none; display: flex; flex-direction: column; background: #e8ebf0; }
.side-head { height: 32px; margin-top: 3px; flex: none; display: flex; align-items: center; padding: 0 10px 0 6px; background: linear-gradient(180deg, #fff, #e6e9ee); color: #555; }
.lab { height: 28px; flex: none; line-height: 36px; padding-left: 5px; font-family: "DejaVu Sans Condensed", "DejaVu Sans", sans-serif; font-size: 12px; color: #111; }
.combo { height: 27px; flex: none; margin: 0 2px 5px 3px; border: 1px solid #a4a8ae; background: #fff; display: flex; align-items: center; padding: 0 1px 0 6px; }
.combo select { flex: 1; appearance: none; border: 0; outline: 0; background: none; padding: 0 4px; font: 12px "DejaVu Sans Condensed", "DejaVu Sans", sans-serif; color: #000; }
.drop { width: 22px; height: 23px; border: 1px solid #a4a8ae; border-radius: 2px; background: linear-gradient(180deg, #fff, #e4e6ea); display: flex; align-items: center; justify-content: center; }
.treebox { flex: 1; min-height: 0; margin-left: 1px; border: 1px solid #9ea3aa; background: #fff; display: flex; flex-direction: column; }
.trow { flex: 1; min-height: 0; display: flex; }
.tree { flex: 1; min-width: 0; margin: 0; padding: 1px 0 0 2px; list-style: none; overflow: hidden; font: 13px "DejaVu Sans Condensed", "DejaVu Sans", sans-serif; color: #000; }
.tree li { height: 18px; display: flex; align-items: center; white-space: nowrap; }
.bold { font-weight: bold; }
.cell { width: 19px; height: 18px; flex: none; position: relative; display: flex; align-items: center; justify-content: center; }
.cell.v::before { content: ""; position: absolute; left: 9px; top: 0; bottom: 0; border-left: 1px dotted #777; }
.cell.half::before { bottom: 8px; }
.cell.stub::after { content: ""; position: absolute; left: 9px; right: -2px; top: 9px; border-top: 1px dotted #777; }
.cell.dash::after { content: ""; position: absolute; left: 18px; width: 4px; top: 9px; border-top: 1px dotted #777; }
.ico { width: 23px; flex: none; display: flex; justify-content: center; }
.vbar { width: 21px; padding-right: 2px; display: flex; flex-direction: column; background: #fafafa; }
.vbar .sb { height: 20px; }
.sb { border: 1px solid #b5b8bd; border-radius: 2px; background: linear-gradient(180deg, #fff, #e8eaee); display: flex; align-items: center; justify-content: center; flex: none; }
.vthumb { height: 295px; border: 1px solid #b5b8bd; border-radius: 2px; background: linear-gradient(90deg, #f8f8f8, #e8eaed); display: flex; flex-direction: column; gap: 2px; align-items: center; justify-content: center; }
.vthumb i { width: 7px; height: 1px; background: #888; }
.hbar { height: 21px; padding: 0 22px 1px 1px; display: flex; background: #f4f4f5; }
.hbar .sb { width: 21px; }
.hthumb { width: 176px; border: 1px solid #b5b8bd; border-radius: 2px; background: linear-gradient(180deg, #f8f8f8, #e8eaed); display: flex; gap: 2px; align-items: center; justify-content: center; }
.hthumb i { width: 1px; height: 7px; background: #888; }
.split { height: 7px; flex: none; margin: 1px 0 0 1px; border: 1px solid #a5a9b1; background: #eef1f5; }
.nav { flex: none; background: #dadde4; display: flex; flex-direction: column; gap: 4px; padding: 2px 1px 0 3px; }
.nav button { height: 31px; border: 1px solid transparent; display: flex; align-items: center; gap: 6px; padding-left: 3px; font-size: 13px; color: #55585e; text-align: left; }
.nav .on { border-color: #a0a6ae; background: linear-gradient(180deg, #dfe3e8, #cfd5db 55%, #e2e6ea); color: #111; }
.navmore { height: 43px; flex: none; background: linear-gradient(180deg, #dadde4, #d4d8dc); display: flex; justify-content: flex-end; padding: 9px 12px 0 0; }

.main { flex: 1; min-width: 0; margin: 0 2px 1px 8px; border: 1px solid #a6a8ab; background: #fff; display: flex; flex-direction: column; box-shadow: inset 3px 2px 0 #e6e9eb; }
.inforow { height: 33px; flex: none; display: flex; padding: 3px 1px 0 3px; font: bold 13px "DejaVu Sans Condensed", "DejaVu Sans", sans-serif; color: #000; }
.ib { width: 27px; background: #dfdfe0; border: 1px solid #b9b9b9; border-bottom: 0; display: flex; align-items: center; justify-content: center; }
.law, .state { border: 1px solid #777; box-shadow: inset 0 0 0 1px #fff; line-height: 20px; padding: 1px 2px; }
.law { width: 228px; background: #b2dc68; text-align: center; }
.state { flex: 1; background: #faf9a0; }
.dtabs { height: 28px; flex: none; margin-left: 2px; display: flex; align-items: flex-end; padding-left: 21px; background: linear-gradient(180deg, #dde1e8, #fafbfc); border-bottom: 1px solid #aaadb2; }
.dtab { height: 24px; width: 136px; margin-bottom: -1px; background: #fff; border: 1px solid #aaadb2; border-width: 1px 1px 0 0; font: bold 12px "DejaVu Sans", sans-serif; color: #0f9499; text-align: center; white-space: nowrap; padding-right: 6px; }
.dtabs svg { margin-bottom: -1px; }
.rulerrow { height: 33px; flex: none; margin-left: 3px; border-top: 2px solid #fff; background: #efefef; display: flex; align-items: flex-start; }
.tabkind { width: 18px; height: 18px; margin: 4px 99px 0 1px; flex: none; border: 1px solid #666; background: #f6f6f6; display: flex; align-items: center; justify-content: center; }
.ruler { flex: none; }
.rnum { font: 11px "Open Sans", sans-serif; fill: #777; }
.docrow { flex: 1; min-height: 0; display: flex; margin: 0 3px 2px 3px; overflow: hidden; background: #fff; }
.gutter { width: 118px; flex: none; display: flex; flex-direction: column; gap: 3px; padding: 2px 0 0 2px; }
.gut2 { display: flex; flex-direction: column; gap: 3px; margin-top: 63px; }
.lex { position: relative; width: 16px; height: 16px; }
.lex b { position: absolute; left: 0; top: 4px; font: bold 7px/8px "Open Sans", sans-serif; color: #38761d; }
.page { width: 803px; flex: none; font-family: "Liberation Sans", Arial, sans-serif; font-size: 16px; line-height: 19px; color: #000; }
.sec { display: flex; align-items: center; height: 19px; margin-bottom: 38px; }
.sec i { flex: 1; height: 1px; background: repeating-linear-gradient(90deg, #000 0 4px, transparent 4px 7px); }
.band { height: 19px; background: #d7e6bb; }
h1 { margin: 0 0 0 -5px; border-left: 5px solid #000; font-size: 20px; line-height: 24px; }
.box { width: 807px; margin-top: 6px; border: 1px solid #000; padding: 9px 5px 20px 9px; }
h2 { margin: 0 0 14px; font-size: 16px; line-height: 19px; text-align: center; }
.box p { margin: 0; height: 19px; display: flex; white-space: pre; }
.box .j { justify-content: space-between; }
.box .c { justify-content: center; }
.box .b { font-weight: bold; }
.box .c + .b { margin-top: 7px; }
.box .e { height: 20px; }
.dot { font-style: normal; font-weight: normal; font-size: 14px; width: 6px; text-align: center; }
.j .dot { width: 4px; }
.soft { display: inline-block; width: 0; position: relative; }
.soft::after { content: "^"; position: absolute; left: -3px; top: -5px; font: 12px/18px "Liberation Sans", sans-serif; }
.docbar { width: 19px; margin-left: auto; background: #f0f0f0; display: flex; flex-direction: column; align-items: center; padding: 7px 0; }
.flip { transform: rotate(180deg); }
.dthumb { width: 19px; height: 21px; background: #cdcdcd; margin-bottom: 101px; }

.status { height: 31px; flex: none; display: flex; align-items: center; background: linear-gradient(180deg, #e9ebee, #c3c6cc); border-top: 1px solid #9a9ea6; color: #55585d; white-space: nowrap; }
.s-user { width: 230px; height: 26px; line-height: 26px; padding-left: 9px; border-right: 1px solid #9a9ea6; margin-right: 10px; }
.abc { position: relative; margin: 0 13px 0 12px; }
.abc b { position: absolute; left: 0; top: -2px; font: bold 9px/10px "Open Sans", sans-serif; color: #333; }
.s-page { width: 140px; }
.s-sec { width: 337px; height: 28px; line-height: 28px; border-right: 1px solid #9a9ea6; margin-right: 15px; }
.s-ein { width: 46px; }
.s-aw { width: 93px; }
.s-path { width: 222px; height: 14px; line-height: 14px; border-right: 1px solid #9a9ea6; }
.fit { width: 32px; height: 25px; margin: 0 3px 0 1px; border: 1px solid #c98d2b; border-radius: 3px; background: #fdd97e; display: flex; align-items: center; justify-content: center; }
.status input { appearance: none; width: 105px; height: 20px; margin: 0 9px 0 11px; background: linear-gradient(#888, #888) 0 9px / 100% 1px no-repeat, linear-gradient(#888, #888) 52px 6px / 1px 8px no-repeat; }
.status input::-webkit-slider-thumb { appearance: none; width: 12px; height: 16px; background: #f5f6f7; border: 2px solid #85898f; border-radius: 1px 1px 6px 6px; }
.s-zoom { width: 55px; padding-left: 13px; }

.rtask { height: 50px; flex: none; background: #020305; display: flex; align-items: center; color: #fff; font-size: 14px; }
.sys, .pin { width: 60px; height: 50px; display: flex; align-items: center; justify-content: center; }
.pin { width: 63px; }
.apps { display: flex; gap: 11px; padding-left: 5px; height: 50px; }
.app { width: 190px; height: 50px; border-bottom: 3px solid #76b9ed; display: flex; align-items: center; gap: 6px; padding-left: 8px; white-space: nowrap; }
.app.on { background: #35383c; width: 200px; margin-left: -4px; padding-left: 13px; }
.rtray { display: flex; align-items: center; gap: 12px; }
.rclock { width: 98px; text-align: center; line-height: 23px; }
.rtask > svg { margin-left: 9px; margin-right: 25px; }
.peek { width: 1px; height: 50px; background: #555; margin-right: 5px; }

.taskbar { height: 59px; flex: none; display: flex; align-items: center; padding: 0 24px 2px 0; background: linear-gradient(90deg, #dfe6f4, #d4e3f5 35%, #d9dcee 55%, #dde9f5 80%, #dde9f4); color: #1c1c1c; font-size: 15px; }
.host { height: 49px; display: flex; align-items: center; gap: 10px; position: relative; white-space: nowrap; }
.h1b { width: 216px; margin-left: -8px; }
.h2b { width: 217px; padding-left: 10px; background: #ecf0fb; border-radius: 5px; }
.host::after { content: ""; position: absolute; bottom: 0; height: 4px; border-radius: 2px; }
.h1b::after { left: 10px; width: 9px; background: #8a8d92; }
.h2b::after { left: 14px; width: 20px; background: #0f78d4; }
.htray { display: flex; align-items: center; gap: 20px; }
.trio { display: flex; gap: 9px; }
.htray svg:first-child { margin-right: 3px; }
.trio svg:first-child { margin-right: 0; }
.hclock { width: 94px; text-align: right; line-height: 20px; font-size: 14px; }
</style>
